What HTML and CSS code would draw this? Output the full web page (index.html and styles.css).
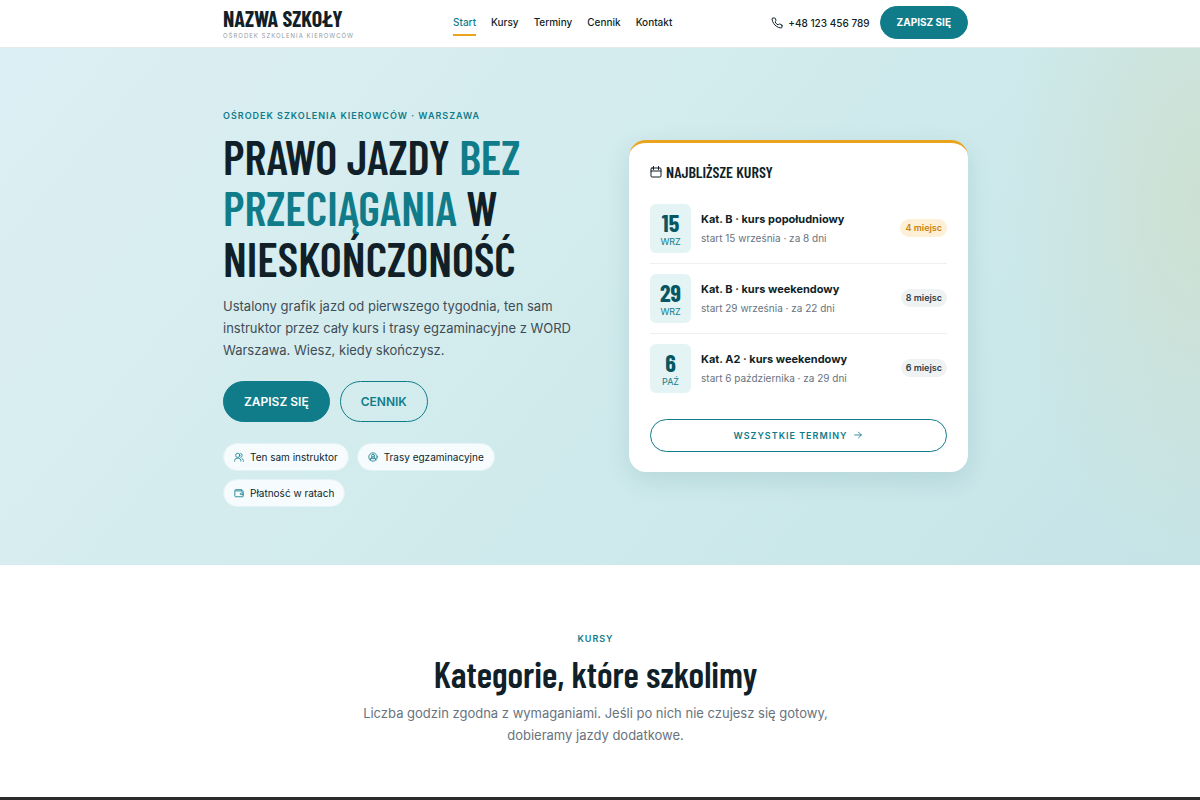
FILE: index.html
```html
<!DOCTYPE html>
<html lang="pl">
<head>
<meta charset="utf-8">
<meta name="viewport" content="width=device-width, initial-scale=1">
<title>Nazwa Szkoły</title>
<link rel="stylesheet" href="styles.css">
</head>
<body>
<header class="topbar">
  <div class="container topbar-inner">
    <a class="brand" href="#">
      <span class="brand-name">NAZWA SZKOŁY</span>
      <span class="brand-sub">OŚRODEK SZKOLENIA KIEROWCÓW</span>
    </a>
    <nav class="nav">
      <a class="nav-link active" href="#">Start</a>
      <a class="nav-link" href="#kursy">Kursy</a>
      <a class="nav-link" href="#terminy">Terminy</a>
      <a class="nav-link" href="#cennik">Cennik</a>
      <a class="nav-link" href="#kontakt">Kontakt</a>
    </nav>
    <div class="actions">
      <a class="phone" href="tel:+48123456789">
        <svg class="icon" viewBox="0 0 24 24"><path d="M22 16.9v3a2 2 0 0 1-2.2 2 19.8 19.8 0 0 1-8.600-3.100 19.500 19.500 0 0 1-6-6A19.800 19.800 0 0 1 2.100 4.200 2 2 0 0 1 4.100 2h3a2 2 0 0 1 2 1.700c.1 1 .4 1.900.7 2.800a2 2 0 0 1-.5 2.100L8.100 9.900a16 16 0 0 0 6 6l1.300-1.300a2 2 0 0 1 2.100-.4c.9.3 1.800.6 2.800.7a2 2 0 0 1 1.700 2z"/></svg>
        <span>+48 123 456 789</span>
      </a>
      <a class="btn btn-solid btn-small" href="#zapisy">ZAPISZ SIĘ</a>
    </div>
  </div>
</header>

<main>
<section class="hero">
  <div class="container hero-grid">
    <div class="intro">
      <p class="eyebrow">OŚRODEK SZKOLENIA KIEROWCÓW · WARSZAWA</p>
      <h1 class="title">PRAWO JAZDY <span class="accent">BEZ PRZECIĄGANIA</span> W NIESKOŃCZONOŚĆ</h1>
      <p class="lead">Ustalony grafik jazd od pierwszego tygodnia, ten sam instruktor przez cały kurs i trasy egzaminacyjne z WORD Warszawa. Wiesz, kiedy skończysz.</p>
      <div class="buttons">
        <a class="btn btn-solid btn-large" href="#zapisy">ZAPISZ SIĘ</a>
        <a class="btn btn-outline btn-large" href="#cennik">CENNIK</a>
      </div>
      <ul class="chips">
        <li class="chip"><svg class="icon" viewBox="0 0 24 24"><circle cx="9" cy="8" r="5"/><path d="M1.500 22v-2a6 6 0 0 1 6-5h3a6 6 0 0 1 6 5v2M16 3.200a5 5 0 0 1 0 9.600M19 15.500a6 6 0 0 1 3.500 4.500v2"/></svg>Ten sam instruktor</li>
        <li class="chip"><svg class="icon" viewBox="0 0 24 24"><circle cx="12" cy="12" r="10"/><circle cx="12" cy="9" r="3.500"/><path d="M9.500 11.500L5 19M14.500 11.500L19 19M6.500 16h11"/></svg>Trasy egzaminacyjne</li>
        <li class="chip"><svg class="icon" viewBox="0 0 24 24"><path d="M19 7V4H4a2 2 0 0 0-2 2v13a2 2 0 0 0 2 2h17a1 1 0 0 0 1-1V8a1 1 0 0 0-1-1H4M22 12h-5a2 2 0 0 0 0 4h5"/></svg>Płatność w ratach</li>
      </ul>
    </div>

    <aside class="card" id="terminy">
      <h2 class="card-title"><svg class="icon" viewBox="0 0 24 24"><rect x="2" y="4" width="20" height="18" rx="2"/><path d="M7 1v6M17 1v6M2 10h20"/></svg>NAJBLIŻSZE KURSY</h2>
      <ul class="courses">
        <li class="course">
          <div class="date"><span class="day">15</span><span class="month">WRZ</span></div>
          <div class="info"><strong class="name">Kat. B · kurs popołudniowy</strong><span class="when">start 15 września · za 8 dni</span></div>
          <span class="seats seats-low">4 miejsc</span>
        </li>
        <li class="course">
          <div class="date"><span class="day">29</span><span class="month">WRZ</span></div>
          <div class="info"><strong class="name">Kat. B · kurs weekendowy</strong><span class="when">start 29 września · za 22 dni</span></div>
          <span class="seats">8 miejsc</span>
        </li>
        <li class="course">
          <div class="date"><span class="day">6</span><span class="month">PAŹ</span></div>
          <div class="info"><strong class="name">Kat. A2 · kurs weekendowy</strong><span class="when">start 6 października · za 29 dni</span></div>
          <span class="seats">6 miejsc</span>
        </li>
      </ul>
      <a class="btn btn-outline btn-wide" href="#terminy">WSZYSTKIE TERMINY <svg class="icon" viewBox="0 0 24 24"><path d="M4 12h16M13 5l7 7-7 7"/></svg></a>
    </aside>
  </div>
</section>

<section class="categories" id="kursy">
  <div class="container">
    <p class="eyebrow">KURSY</p>
    <h2 class="section-title">Kategorie, które szkolimy</h2>
    <p class="section-text">Liczba godzin zgodna z wymaganiami. Jeśli po nich nie czujesz się gotowy, dobieramy jazdy dodatkowe.</p>
  </div>
</section>
</main>
<footer class="strip"></footer>
</body>
</html>
```
FILE: styles.css
```css
:root {
  --teal: #107c8a;
  --teal-dark: #075762;
  --ink: #101f28;
  --muted: #68737e;
  --amber: #e9a31c;
  --display: "Barlow Condensed", "Roboto Condensed", "Liberation Sans Narrow", "Liberation Sans", sans-serif;
}

* { box-sizing: border-box; }

body {
  margin: 0;
  font-family: Inter, "Liberation Sans", sans-serif;
  font-size: 10px;
  color: var(--ink);
  background: #fff;
}

h1, h2, p, ul { margin: 0; padding: 0; }
ul { list-style: none; }
a { color: inherit; text-decoration: none; }

.container {
  max-width: 745px;
  margin: 0 auto;
}

.topbar, .hero, .categories { padding-right: 9px; }

.icon {
  width: 12px;
  height: 12px;
  flex: none;
  fill: none;
  stroke: currentColor;
  stroke-width: 2;
  stroke-linecap: round;
  stroke-linejoin: round;
}

.topbar { border-bottom: 1px solid #e4eaeb; }

.topbar-inner {
  display: flex;
  align-items: center;
  justify-content: space-between;
  padding-top: 5px;
  padding-bottom: 7px;
}

.brand {
  display: flex;
  flex-direction: column;
  gap: 2px;
  padding-top: 2px;
}

.brand-name {
  font-family: var(--display);
  font-size: 22px;
  line-height: 23px;
  font-weight: 700;
}

.brand-sub {
  font-size: 6px;
  line-height: 8px;
  letter-spacing: 1px;
  color: #929a9f;
}

.nav { display: flex; gap: 15px; }

.nav-link {
  padding: 6px 0 5px;
  line-height: 14px;
  font-weight: 500;
  border-bottom: 2px solid transparent;
}

.nav-link.active {
  color: var(--teal);
  border-color: var(--amber);
}

.actions { display: flex; align-items: center; gap: 10px; }

.phone {
  display: flex;
  align-items: center;
  gap: 5px;
  font-weight: 500;
}

.btn {
  display: inline-flex;
  align-items: center;
  justify-content: center;
  gap: 6px;
  border: 1px solid var(--teal);
  border-radius: 24px;
  font-weight: 600;
}

.btn-solid { background: var(--teal); color: #fff; }
.btn-outline { color: var(--teal); }
.btn-small { padding: 8px 16px; line-height: 15px; font-weight: 700; }
.btn-large { padding: 12px 20px; font-size: 12px; line-height: 15px; }
.btn-wide {
  width: 100%;
  padding: 8px 16px;
  font-size: 9px;
  line-height: 15px;
  letter-spacing: 1px;
}
.btn-wide .icon { width: 10px; height: 10px; }

.hero {
  padding-top: 60px;
  padding-bottom: 58px;
  background:
    radial-gradient(ellipse 190px 380px at 100% 30%, rgba(206, 224, 208, 0.9), rgba(206, 224, 208, 0)),
    linear-gradient(130deg, #ddeff4 0%, #d4ecee 38%, #cde9eb 65%, #c5e3e7 100%);
}

.hero-grid {
  display: grid;
  grid-template-columns: 108fr 100fr;
  gap: 40px;
  align-items: center;
}

.eyebrow {
  font-size: 9px;
  line-height: 16px;
  font-weight: 600;
  letter-spacing: 1px;
  color: var(--teal);
}

.title {
  margin-top: 7px;
  font-family: var(--display);
  font-size: 47px;
  line-height: 51px;
  font-weight: 600;
}

.accent { color: var(--teal); }

.lead {
  margin-top: 11px;
  font-size: 13px;
  line-height: 22px;
  color: #3e4c56;
}

.buttons {
  display: flex;
  gap: 10px;
  margin-top: 20px;
}

.chips {
  display: flex;
  flex-wrap: wrap;
  gap: 8px;
  margin-top: 21px;
}

.chip {
  display: flex;
  align-items: center;
  gap: 6px;
  padding: 6px 10px;
  border: 1px solid #e4f3f5;
  border-radius: 14px;
  line-height: 14px;
  background: #f6fbfd;
}

.chip .icon { width: 10px; height: 10px; color: var(--teal); }

.card {
  margin-bottom: 4px;
  padding: 19px 21px 20px;
  border-top: 3px solid var(--amber);
  border-radius: 17px;
  background: #fff;
  box-shadow: 0 8px 24px rgba(16, 90, 100, 0.12);
}

.card-title {
  display: flex;
  align-items: center;
  gap: 4px;
  font-family: var(--display);
  font-size: 16px;
  line-height: 20px;
  font-weight: 600;
}

.courses { margin: 12px 0 16px; }

.course {
  display: flex;
  align-items: center;
  gap: 10px;
  padding: 10px 0;
}

.course + .course { border-top: 1px solid #edf0f2; }

.date {
  display: flex;
  flex-direction: column;
  align-items: center;
  width: 41px;
  padding: 7px 0 5px;
  border-radius: 6px;
  background: #e4f3f3;
}

.day {
  font-family: var(--display);
  font-size: 24px;
  line-height: 24px;
  font-weight: 700;
  color: var(--teal-dark);
}

.month {
  font-size: 9px;
  line-height: 13px;
  color: var(--teal);
}

.info {
  display: flex;
  flex: 1;
  flex-direction: column;
  gap: 4px;
}

.name { font-size: 11px; line-height: 16px; font-weight: 700; }
.when { line-height: 14px; color: var(--muted); }

.seats {
  padding: 3px 5px;
  border-radius: 9px;
  font-size: 9px;
  line-height: 12px;
  font-weight: 600;
  color: #303d46;
  background: #eff2f3;
}

.seats-low { color: #c98310; background: #fdf0d6; }

.categories {
  padding-top: 66px;
  padding-bottom: 51px;
  text-align: center;
}

.section-title {
  margin-top: 6px;
  font-family: var(--display);
  font-size: 36px;
  line-height: 42px;
  font-weight: 600;
}

.section-text {
  max-width: 480px;
  margin: 7px auto 0;
  font-size: 13px;
  line-height: 22px;
  color: var(--muted);
}

.strip { height: 24px; background: #2b2b2d; }
```
